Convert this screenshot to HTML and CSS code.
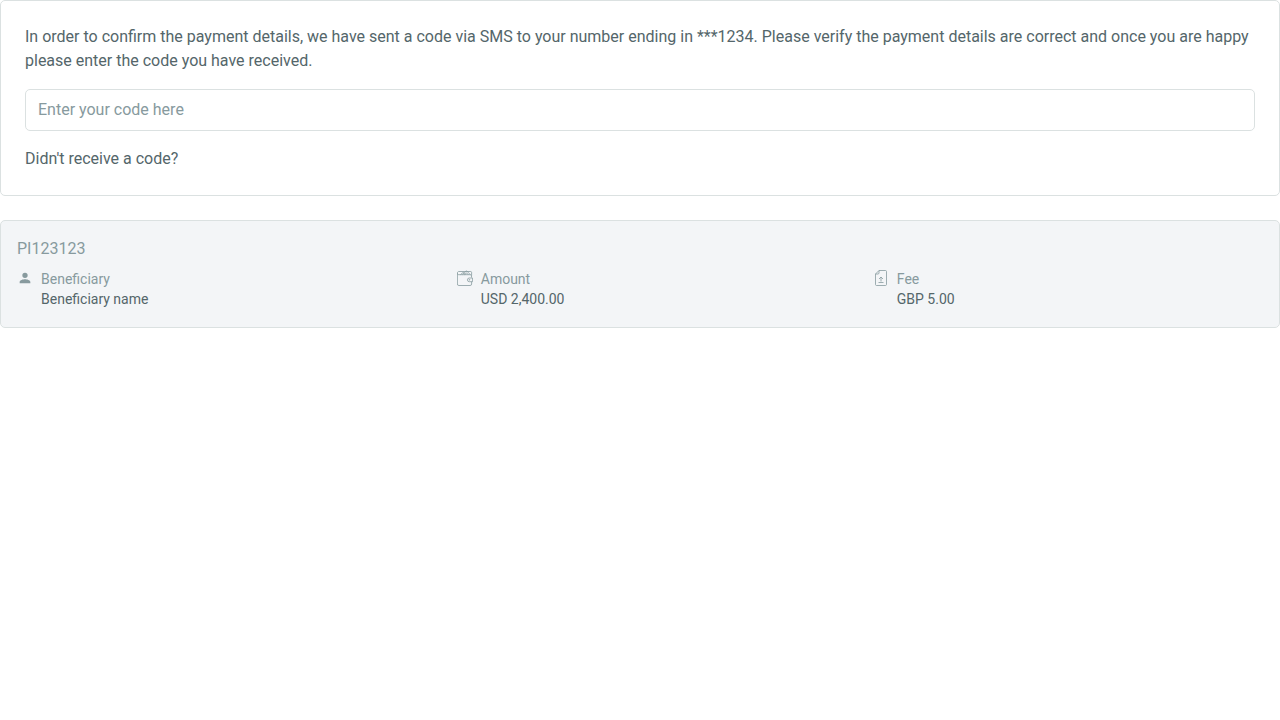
FILE: index.html
```html
<!DOCTYPE html>
<html lang="en">
<head>
<meta charset="utf-8">
<meta name="viewport" content="width=device-width, initial-scale=1">
<title>Confirm payment</title>
<link rel="stylesheet" href="styles.css">
</head>
<body>
<main class="page">
  <form class="card">
    <label class="message" for="code">In order to confirm the payment details, we have sent a code via SMS to your number ending in ***1234. Please verify the payment details are correct and once you are happy please enter the code you have received.</label>
    <input class="code-input" id="code" type="text" placeholder="Enter your code here" autocomplete="one-time-code">
    <button class="resend" type="button">Didn't receive a code?</button>
  </form>
  <section class="card summary">
    <h2 class="reference">PI123123</h2>
    <dl class="details">
      <div class="detail">
        <svg class="icon" viewBox="0 0 24 24" fill="currentColor" aria-hidden="true"><path d="M12 12a4 4 0 1 0 0-8 4 4 0 0 0 0 8zm0 2c-2.700 0-8 1.300-8 4v2h16v-2c0-2.700-5.300-4-8-4z"/></svg>
        <div><dt class="label">Beneficiary</dt><dd class="value">Beneficiary name</dd></div>
      </div>
      <div class="detail">
        <svg class="icon" viewBox="0 0 16 16" fill="none" stroke="currentColor" stroke-width=".8" stroke-linejoin="round" aria-hidden="true"><path d="M14.500 7.500V6c0-.8-.4-1.300-1.200-1.300H1.700A1.300 1.300 0 0 1 .4 3.200V14a1.500 1.500 0 0 0 1.500 1.500h11.200a1.500 1.500 0 0 0 1.500-1.500v-2.300M.4 3.200c0-1 .5-1.700 1.300-1.700h12.100c.6 0 .8.500.8 1v3M3.500 4.600l2.800-2.300 1.700 2.300M5.500 4.600L9.500.8l3.800 3.800M7.600 4.600l1.900-1.700 1.700 1.700M15.600 8h-3.300a1.800 1.800 0 0 0 0 3.700h3.300z"/><circle cx="12.500" cy="9.800" r=".4"/></svg>
        <div><dt class="label">Amount</dt><dd class="value">USD 2,400.00</dd></div>
      </div>
      <div class="detail">
        <svg class="icon" viewBox="0 0 16 16" fill="none" stroke="currentColor" stroke-width=".8" stroke-linejoin="round" aria-hidden="true"><path d="M6 .5h6.500c.6 0 1 .4 1 1v13c0 .6-.4 1-1 1h-9c-.6 0-1-.4-1-1V4zM6 .5V3c0 .6-.4 1-1 1H2.500M8 11.500V7M6 9l2-2 2 2M5.500 12.500h5"/></svg>
        <div><dt class="label">Fee</dt><dd class="value">GBP 5.00</dd></div>
      </div>
    </dl>
  </section>
</main>
</body>
</html>
```
FILE: styles.css
```css
* { box-sizing: border-box; }
body {
  margin: 0;
  background: #fff;
  color: #54666a;
  font: 16px/24px Roboto, "Liberation Sans", sans-serif;
}
.page { display: flex; flex-direction: column; gap: 24px; }
.card {
  display: flex;
  flex-direction: column;
  align-items: flex-start;
  gap: 16px;
  padding: 24px;
  border: 1px solid #dbe1e1;
  border-radius: 5px;
}
.code-input {
  width: 100%;
  padding: 8px 12px;
  border: 1px solid #dbe1e1;
  border-radius: 5px;
  background: #fff;
  color: inherit;
  font: inherit;
}
.code-input::placeholder { color: #879a9e; opacity: 1; }
.resend {
  padding: 0;
  border: 0;
  background: none;
  color: inherit;
  font: inherit;
  cursor: pointer;
}
.summary {
  align-items: stretch;
  gap: 8px;
  padding: 16px 16px 18px;
  background: #f3f5f7;
}
.reference {
  margin: 0;
  color: #879a9e;
  font-size: 16px;
  font-weight: 400;
}
.details { display: flex; margin: 0; font-size: 14px; line-height: 20px; }
.detail { display: flex; flex: 1 1 auto; gap: 8px; }
.icon { flex: none; width: 16px; height: 16px; margin-top: 1px; color: #879a9e; }
.label { color: #879a9e; }
.value { margin: 0; }
```
